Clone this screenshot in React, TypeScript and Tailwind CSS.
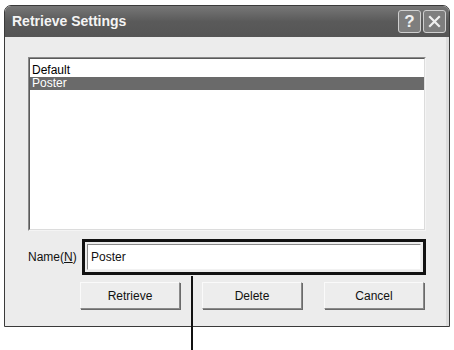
export default function App() {
  const font = { fontFamily: '"Liberation Sans", Arial, sans-serif' };
  return (
    <div className="relative h-[350px] w-[454px] overflow-hidden bg-white" style={font}>
      <div className="ml-[4px] mt-[5px] flex h-[322px] w-[446px] flex-col overflow-hidden rounded-t-[7px] border border-[#3a3a3a] bg-[#ececec]">
        {/* title bar */}
        <div className="flex h-[31px] shrink-0 items-center justify-between bg-gradient-to-b from-[#777] via-[#5a5a5a] to-[#555] pl-[7px] pr-[3px]">
          <span className="text-[14px] font-bold text-[#f4f4f4]">Retrieve Settings</span>
          <div className="flex gap-[2px]">
            <div className="flex h-[23px] w-[23px] items-center justify-center rounded-[3px] border border-[#cfcfcf] bg-[#7e7e7e] text-[17px] font-bold leading-none text-[#f0f0f0]">?</div>
            <div className="flex h-[23px] w-[23px] items-center justify-center rounded-[3px] border border-[#cfcfcf] bg-[#7e7e7e]">
              <svg width="13" height="13" viewBox="0 0 13 13">
                <path d="M2 2 L11 11 M11 2 L2 11" stroke="#f0f0f0" strokeWidth="2.2" strokeLinecap="square" />
              </svg>
            </div>
          </div>
        </div>

        {/* body */}
        <div className="flex flex-1 flex-col border-r-[3px] border-r-[#dcdcdc] pl-[23px] pr-[20px] pt-[20px]">
          <div className="h-[174px] w-[398px] border border-[#8a8a8a] border-b-[#f4f4f4] border-r-[#f4f4f4] bg-white">
            <div className="h-full w-full border border-[#5a5a5a] border-b-[#dcdcdc] border-r-[#dcdcdc] pt-[5px] text-[12px] leading-[12px]">
              <div className="px-[2px] text-black">Default</div>
              <div className="mt-[1px] bg-[#6a6a6a] px-[2px] pb-[1px] text-white">Poster</div>
            </div>
          </div>

          <div className="mt-[8px] flex items-center">
            <span className="w-[59px] text-[12px] text-[#111]">
              Name(<span className="underline">N</span>)
            </span>
            <div className="border-[3px] border-[#111] p-[2px]">
              <div className="flex h-[26px] w-[334px] items-center border border-[#8a8a8a] border-b-[#f2f2f2] border-r-[#f2f2f2] bg-white pl-[3px] text-[12px] text-[#111]">
                Poster
              </div>
            </div>
          </div>

          <div className="mt-[7px] flex gap-[22px] pl-[52px]">
            {["Retrieve", "Delete", "Cancel"].map((b) => (
              <div
                key={b}
                className="flex h-[27px] w-[100px] items-center justify-center border border-[#fafafa] border-b-[#8a8a8a] border-r-[#8a8a8a] bg-[#ededed] text-[12px] text-[#111] shadow-[1px_1px_0_#6a6a6a]"
              >
                {b}
              </div>
            ))}
          </div>
        </div>
      </div>

      {/* annotation line */}
      <div className="absolute left-[191px] top-[276px] h-[74px] w-[2px] bg-[#111]" />
    </div>
  );
}
